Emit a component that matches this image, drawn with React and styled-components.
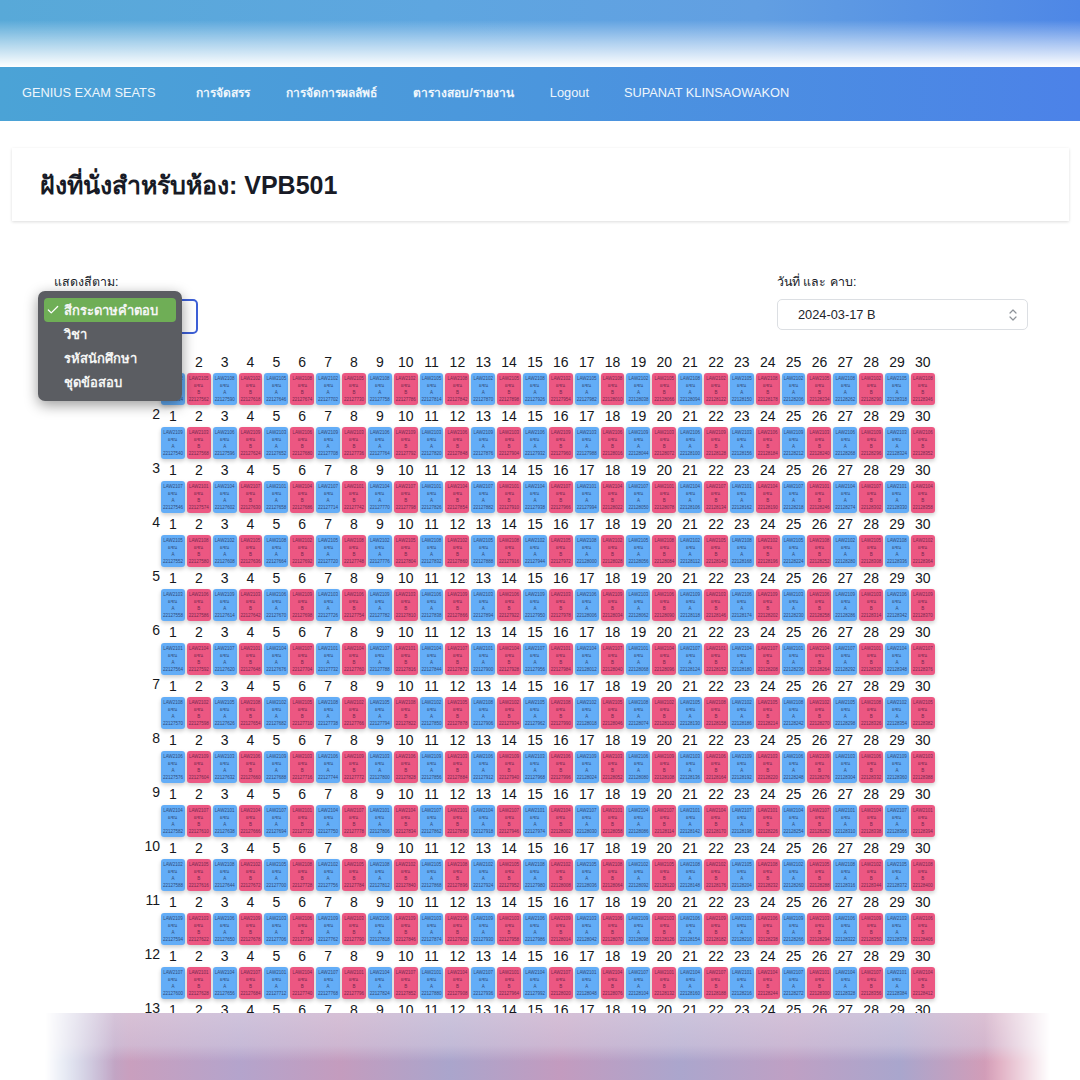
import React from "react";
import styled, { createGlobalStyle } from "styled-components";
import { Check } from "lucide-react";

const GlobalStyle = createGlobalStyle`
  html, body {
    margin: 0;
    background: #fff;
    font-family: "Liberation Sans", Arial, sans-serif;
    color: #15171c;
  }
`;

const Page = styled.div`
  position: relative;
  height: 1080px;
  overflow: hidden;
`;

const TopBand = styled.div`
  height: 67px;
  background:
    linear-gradient(180deg, rgba(255, 255, 255, 0) 30%, rgba(255, 255, 255, 0.5) 64%, #fff 100%),
    linear-gradient(90deg, #58a9d8 0%, #5ea6e0 40%, #629fe2 70%, #4e87e6 100%);
`;

const NavBar = styled.nav`
  height: 54px;
  box-sizing: border-box;
  display: flex;
  align-items: center;
  padding: 0 0 4px 22px;
  background: linear-gradient(90deg, #4ba3d6 0%, #4b96dd 50%, #4c82e8 100%);
`;

const Brand = styled.span`
  font-size: 12.8px;
  color: #eef6fc;
  margin-right: 41px;
`;

const NavLink = styled.a`
  font-size: ${(p) => (p.$thai ? 12 : 12.8)}px;
  font-weight: ${(p) => (p.$thai ? 700 : 400)};
  color: #eef6fc;
  margin-right: ${(p) => (p.$thai ? 36 : 35)}px;
`;

const TitleCard = styled.header`
  margin: 27px 11px 0 12px;
  height: 73px;
  display: flex;
  align-items: center;
  padding-left: 28px;
  background: #fff;
  box-shadow: 0 1px 3px rgba(0, 0, 0, 0.14);
`;

const Title = styled.h1`
  margin: 0;
  font-size: 25px;
  font-weight: 700;
  color: #181b26;
`;

const Filters = styled.section`
  margin-top: 53px;
  padding: 0 52px 0 54px;
  display: flex;
  justify-content: space-between;
`;

const Filter = styled.div`
  position: relative;
  width: ${(p) => p.$width}px;
`;

const FilterLabel = styled.label`
  display: block;
  font-size: 12.4px;
  line-height: 17px;
  margin-bottom: 8px;
  color: #20232a;
`;

const SelectBox = styled.div`
  box-sizing: border-box;
  height: ${(p) => (p.$focused ? 35 : 31)}px;
  display: flex;
  align-items: center;
  justify-content: space-between;
  padding: 0 9px 0 20px;
  font-size: 12.8px;
  color: #22252b;
  background: #fff;
  border: ${(p) => (p.$focused ? "2px solid #3d5fd6" : "1px solid #dcdfe3")};
  border-radius: 5px;
`;

const Dropdown = styled.ul`
  position: absolute;
  z-index: 3;
  top: 17px;
  left: -16px;
  width: 144px;
  box-sizing: border-box;
  margin: 0;
  padding: 7px 6px;
  list-style: none;
  background: #5b5d62;
  border-radius: 7px;
  box-shadow: 0 4px 14px rgba(0, 0, 0, 0.4);
`;

const Option = styled.li`
  height: 24px;
  display: flex;
  align-items: center;
  padding-left: 20px;
  position: relative;
  font-size: 13px;
  font-weight: 700;
  color: #f4f5f4;
  border-radius: 4px;
  background: ${(p) => (p.$selected ? "#6fae56" : "transparent")};

  svg {
    position: absolute;
    left: 2px;
    top: 5px;
  }
`;

const SeatMap = styled.section`
  margin-top: 17px;
  padding-left: 161px;
`;

const SeatRow = styled.div`
  position: relative;
  height: 54px;
`;

const RowLabel = styled.span`
  position: absolute;
  right: 100%;
  top: 0;
  margin-right: 1px;
  font-size: 14px;
  line-height: 18px;
`;

const SeatGrid = styled.div`
  display: grid;
  grid-template-columns: repeat(30, 23.86px);
  column-gap: 2px;
`;

const SeatNumber = styled.span`
  height: 22px;
  font-size: 14px;
  line-height: 22px;
  text-align: center;
  white-space: nowrap;
`;

const Seat = styled.div`
  height: 31.5px;
  box-sizing: border-box;
  padding-top: 2px;
  display: flex;
  flex-direction: column;
  align-items: center;
  font-size: 4.5px;
  line-height: 7px;
  color: ${(p) => (p.$set === "A" ? "#2f4a78" : "#76284e")};
  border-radius: 3px;
  overflow: hidden;
  background: ${(p) => (p.$set === "A" ? "#63adf7" : "#ec5782")};
  box-shadow: 0 2px 4px rgba(0, 0, 0, 0.2);
`;

const BottomBlur = styled.div`
  position: absolute;
  left: 0;
  right: 0;
  bottom: 0;
  height: 67px;
  z-index: 2;
  background:
    linear-gradient(180deg, rgba(226, 216, 230, 0.6) 0%, rgba(214, 204, 224, 0.55) 48%, rgba(190, 170, 205, 0) 72%),
    linear-gradient(
      90deg,
      #a9b8da 60px,
      #c99fbe 130px,
      #b4a4cc 240px,
      #c49cbe 340px,
      #aaa5cc 450px,
      #c39bbf 560px,
      #aba6cd 680px,
      #bfa0c4 790px,
      #a9a6cd 900px,
      #d99bb4 1000px
    ),
    #b9a5c9;
  -webkit-mask-image: linear-gradient(90deg, transparent 45px, #000 115px, #000 985px, transparent 1050px);
  mask-image: linear-gradient(90deg, transparent 45px, #000 115px, #000 985px, transparent 1050px);
`;

const ChevronUpDown = () => (
  <svg width="10" height="14" viewBox="0 0 10 14" fill="none" stroke="#8d9299" strokeWidth="1.2" strokeLinecap="round" strokeLinejoin="round">
    <path d="M2 5 5 2l3 3" />
    <path d="M2 9l3 3 3-3" />
  </svg>
);

const navLinks = ["การจัดสรร", "การจัดการผลลัพธ์", "ตารางสอบ/รายงาน"];
const colorOptions = ["สีกระดาษคำตอบ", "วิชา", "รหัสนักศึกษา", "ชุดข้อสอบ"];
const rows = Array.from({ length: 13 }, (_, i) => i + 1);
const cols = Array.from({ length: 30 }, (_, i) => i + 1);

const App = () => {
  return (
    <Page>
      <GlobalStyle />
      <TopBand />
      <NavBar>
        <Brand>GENIUS EXAM SEATS</Brand>
        {navLinks.map((link) => (
          <NavLink key={link} $thai>
            {link}
          </NavLink>
        ))}
        <NavLink>Logout</NavLink>
        <NavLink>SUPANAT KLINSAOWAKON</NavLink>
      </NavBar>
      <TitleCard>
        <Title>ฝังที่นั่งสำหรับห้อง: VPB501</Title>
      </TitleCard>
      <Filters>
        <Filter $width={144}>
          <FilterLabel>แสดงสีตาม:</FilterLabel>
          <SelectBox $focused />
          <Dropdown>
            {colorOptions.map((option, index) => (
              <Option key={option} $selected={index === 0}>
                {index === 0 && <Check size={14} strokeWidth={2.2} color="#fff" />}
                {option}
              </Option>
            ))}
          </Dropdown>
        </Filter>
        <Filter $width={251}>
          <FilterLabel>วันที่ และ คาบ:</FilterLabel>
          <SelectBox>
            2024-03-17 B
            <ChevronUpDown />
          </SelectBox>
        </Filter>
      </Filters>
      <SeatMap>
        {rows.map((row) => (
          <SeatRow key={row}>
            <RowLabel>{row}</RowLabel>
            <SeatGrid>
              {cols.map((col) => (
                <SeatNumber key={col}>{col}</SeatNumber>
              ))}
              {cols.map((col) => {
                const set = col % 2 === 1 ? "A" : "B";
                return (
                  <Seat key={col} $set={set}>
                    <span>LAW{2101 + ((row * 7 + col * 3) % 9)}</span>
                    <span>ผชน</span>
                    <span>{set}</span>
                    <span>{22127500 + col * 28 + row * 6}</span>
                  </Seat>
                );
              })}
            </SeatGrid>
          </SeatRow>
        ))}
      </SeatMap>
      <BottomBlur />
    </Page>
  );
};

export default App;
